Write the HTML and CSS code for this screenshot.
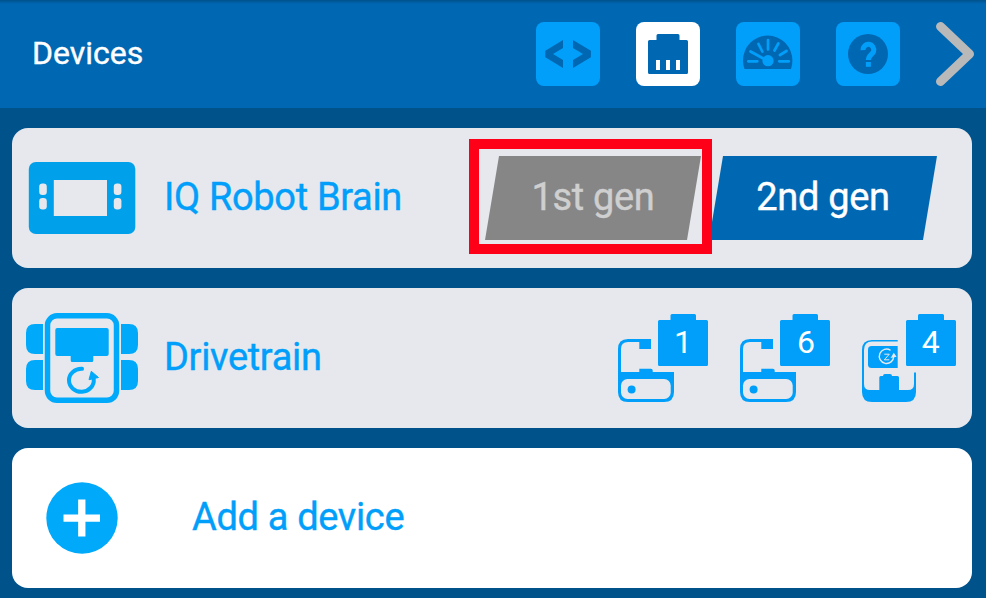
FILE: index.html
```html
<!DOCTYPE html>
<html lang="en">
<head>
    <meta charset="UTF-8">
    <meta name="viewport" content="width=device-width, initial-scale=1.0">
    <title>Devices</title>
    <link rel="stylesheet" href="styles.css">
</head>
<body>
    <header class="header">
        <h1>Devices</h1>
        <nav class="tabs">
            <button type="button" class="tab" aria-label="Code">
                <svg viewBox="0 0 64 64" fill="#0068b3">
                    <path d="M27 18 9.3 28.7v6.6L27 46v-8l-10-6 10-6zM37 18l17.9 10.7v6.6L37 46v-8l10-6-10-6z"/>
                </svg>
            </button>
            <button type="button" class="tab active" aria-label="Devices">
                <svg viewBox="0 0 64 64">
                    <path fill="#0068b3" d="M22 12h20q1.5 0 1.5 1.5V18H50.5q1.5 0 1.5 1.5V50.5q0 1.5-1.5 1.5H13.5q-1.5 0-1.5-1.5V19.5q0-1.5 1.5-1.5h7v-4.5Q20.5 12 22 12z"/>
                    <path fill="#fff" d="M20 38h4v10h-4zM30 38h4v10h-4zM40 38h4v10h-4z"/>
                </svg>
            </button>
            <button type="button" class="tab" aria-label="Monitor">
                <svg viewBox="0 0 64 64">
                    <path fill="#0068b3" d="M8.5 47Q7 43 7 38.5A24.7 25 0 0 1 56.4 38.5Q56.4 43 55 47z"/>
                    <g stroke="#019ffa" stroke-width="2.7" stroke-linecap="round">
                        <path d="M12.3 39.3h9M43.3 39.3h9.5M22.5 22l3.8 7.5M32 18v9.5M42.3 21.5l-3.8 7M50.5 29l-6.5 4M14.5 29.5 30 38"/>
                    </g>
                    <circle cx="32" cy="38.7" r="5.6" fill="#019ffa"/>
                </svg>
            </button>
            <button type="button" class="tab" aria-label="Help">
                <svg viewBox="0 0 64 64">
                    <circle cx="32" cy="32" r="20" fill="#0068b3"/>
                    <path fill="none" stroke="#019ffa" stroke-width="5" d="M27 28.2a5.4 5.6 0 1 1 10.6 1.2c-1 3-5.2 3.7-5.2 8.5"/>
                    <path fill="#019ffa" d="M29.9 40h5v4.8h-5z"/>
                </svg>
            </button>
        </nav>
        <svg class="chevron" viewBox="0 0 38 64">
            <path d="M4.5 4.5 33.5 32 4.5 59.5"/>
        </svg>
    </header>

    <main class="devices">
        <section class="card">
            <svg class="device-icon" viewBox="0 0 120 100">
                <rect x="6.8" y="14" width="106.5" height="72" rx="7" fill="#00a0eb"/>
                <g fill="#e6e8ed">
                    <rect x="31.8" y="32" width="53.2" height="36"/>
                    <rect x="17.2" y="35.5" width="7.6" height="11.5" rx="3.3"/>
                    <rect x="17.2" y="50" width="7.6" height="11.5" rx="3.3"/>
                    <rect x="91.8" y="35.5" width="7.6" height="11.5" rx="3.3"/>
                    <rect x="91.8" y="50" width="7.6" height="11.5" rx="3.3"/>
                </g>
            </svg>
            <span class="name">IQ Robot Brain</span>
            <div class="gens">
                <button type="button" class="gen first">1st gen</button>
                <button type="button" class="gen second">2nd gen</button>
                <div class="highlight"></div>
            </div>
        </section>

        <section class="card">
            <svg class="device-icon" viewBox="0 0 120 100" fill="#00a9fa">
                <!-- wheels -->
                <path d="M21 16h-8q-9 0-9 9v12q0 9 9 9h8zM21 52h-8q-9 0-9 9v12q0 9 9 9h8zM99 16h8q9 0 9 9v12q0 9-9 9h-8zM99 52h8q9 0 9 9v12q0 9-9 9h-8z"/>
                <!-- body -->
                <rect x="25.5" y="7.8" width="69" height="84.5" rx="9.5" fill="none" stroke="#00a9fa" stroke-width="5.5"/>
                <path d="M35.3 20H84.7q2 0 2 2V46q0 2-2 2H71.3v4.5q0 1.5-1.5 1.5H50.2q-1.5 0-1.5-1.5V48H35.3q-2 0-2-2V22q0-2 2-2z"/>
                <path d="M60 60.8A12.4 11.5 0 1 0 71.7 71" fill="none" stroke="#00a9fa" stroke-width="4" stroke-linecap="round"/>
                <path d="M69.3 63.3 76.5 69.5 67 71.7z" stroke="#00a9fa"/>
            </svg>
            <span class="name">Drivetrain</span>
            <div class="ports">
                <svg class="port" viewBox="0 0 102 100" fill="#019ffa">
                    <path d="M39 31H16Q6 31 6 41V84q0 10 10 10H52q10 0 10-10V64H40.7v-1.5q0-1.8-1.8-1.8H27.3V64H9V41q0-7 7-7H27.3v7H39z"/>
                    <rect x="9" y="71" width="49.7" height="20" rx="6.5" fill="#e6e8ed"/>
                    <circle cx="19.6" cy="81.4" r="4"/>
                    <path d="M60 6H82.5q1.5 0 1.5 1.5V12H94.5q1.5 0 1.5 1.5V56.5q0 1.5-1.5 1.5H47.5q-1.5 0-1.5-1.5V13.5q0-1.5 1.5-1.5H58.5V7.5Q58.5 6 60 6z"/>
                    <text x="71" y="44.7">1</text>
                </svg>
                <svg class="port" viewBox="0 0 102 100" fill="#019ffa">
                    <path d="M39 31H16Q6 31 6 41V84q0 10 10 10H52q10 0 10-10V64H40.7v-1.5q0-1.8-1.8-1.8H27.3V64H9V41q0-7 7-7H27.3v7H39z"/>
                    <rect x="9" y="71" width="49.7" height="20" rx="6.5" fill="#e6e8ed"/>
                    <circle cx="19.6" cy="81.4" r="4"/>
                    <path d="M60 6H82.5q1.5 0 1.5 1.5V12H94.5q1.5 0 1.5 1.5V56.5q0 1.5-1.5 1.5H47.5q-1.5 0-1.5-1.5V13.5q0-1.5 1.5-1.5H58.5V7.5Q58.5 6 60 6z"/>
                    <text x="72" y="44.7">6</text>
                </svg>
                <svg class="port" viewBox="0 0 102 100" fill="#019ffa">
                    <path d="M41.7 32H16Q6 32 6 42V84q0 10 10 10H50q10 0 10-10V64.5H58V76q0 6-6 6H43V69.5q0-1.5-1.5-1.5H36q0-2-2-2H29q-2 0-2 2H24.8q-1.5 0-1.5 1.5V82H14q-6 0-6-6V42q0-8.5 8-8.5H41.7z"/>
                    <path d="M41.7 38H15.5Q12 38 12 41.5V56.5Q12 60 15.5 60H41.7z"/>
                    <g fill="none" stroke="#e6e8ed" stroke-width="1.4">
                        <path d="M34.5 42.3a7.2 7.2 0 1 0 3.2 6"/>
                        <path d="M28.3 46.2h5l-5 5.6h5" stroke-width="1"/>
                        <path d="M36 49l1.8-3 1.6 2.2z" fill="#e6e8ed"/>
                    </g>
                    <path d="M63.5 6H86.5q1.5 0 1.5 1.5V12H98.5q1.5 0 1.5 1.5V56.5q0 1.5-1.5 1.5H51.5q-1.5 0-1.5-1.5V13.5q0-1.5 1.5-1.5H62V7.5Q62 6 63.5 6z"/>
                    <text x="74.8" y="44.7">4</text>
                </svg>
            </div>
        </section>

        <section class="card add">
            <svg class="device-icon" viewBox="0 0 120 100">
                <circle cx="60" cy="50" r="35.7" fill="#00a9fa"/>
                <path d="M41.5 50.2h36.5M59.8 31.5v37" stroke="#fff" stroke-width="7.3"/>
            </svg>
            <span class="name">Add a device</span>
        </section>
    </main>
</body>
</html>
```
FILE: styles.css
```css
* { box-sizing: border-box; }
body { font-family: Roboto, sans-serif; margin: 0; height: 598px; overflow: hidden; background: #00528a; -webkit-text-stroke: 0.4px; }
button { border: 0; padding: 0; font: inherit; }
svg { display: block; flex: none; }

.header { display: flex; align-items: center; height: 108px; padding: 0 12px 0 32px; background: linear-gradient(#00528a, #0068b3 4px); }
.header h1 { margin: 0; color: #fff; font-size: 32px; font-weight: 400; line-height: 36px; padding-bottom: 2px; }
.tabs { display: flex; gap: 36px; margin-left: auto; }
.tab { width: 64px; height: 64px; border-radius: 8px; background: #019ffa; }
.tab.active { background: #fff; }
.chevron { width: 38px; height: 64px; margin-left: 36px; fill: none; stroke: #b9b9b9; stroke-width: 9; stroke-linecap: round; stroke-linejoin: round; }

.devices { display: flex; flex-direction: column; gap: 20px; padding: 20px 14px 0 12px; }
.card { display: flex; align-items: center; height: 140px; padding-left: 10px; border-radius: 16px; background: #e6e8ed; }
.card.add { background: #fff; }
.device-icon { width: 120px; height: 100px; }
.name { color: #019ffa; font-size: 38px; letter-spacing: -0.33px; line-height: 44px; margin-left: 22px; padding-bottom: 2px; white-space: nowrap; }
.add .name { margin-left: 50px; }

.gens { position: relative; display: flex; gap: 8px; margin-left: auto; margin-right: 35px; }
.gen { height: 84px; padding-bottom: 2px; font-size: 38px; letter-spacing: -0.33px; clip-path: polygon(14px 0, 100% 0, calc(100% - 14px) 100%, 0 100%); }
.gen.first { width: 216px; background: #868686; color: #cfcfcf; }
.gen.second { width: 228px; background: #0068b3; color: #fff; }
.highlight { position: absolute; left: -16px; top: -17px; width: 243px; height: 115px; border: 10px solid #ff0019; }

.ports { display: flex; gap: 20px; margin-left: auto; margin-right: 14px; }
.port { width: 102px; height: 100px; }
.port text { fill: #fff; font-size: 32px; text-anchor: middle; -webkit-text-stroke: 0; }
```
